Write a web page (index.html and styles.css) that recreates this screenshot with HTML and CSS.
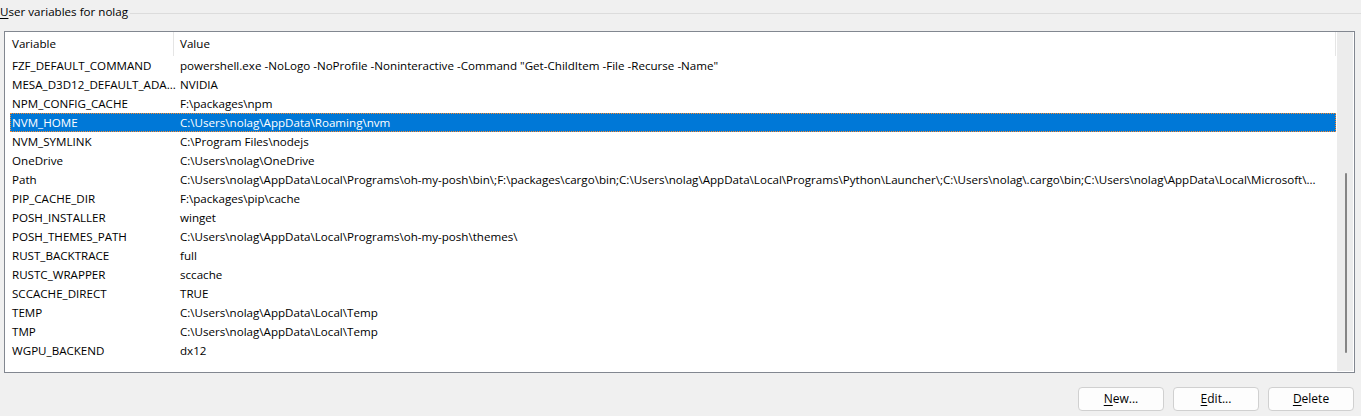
FILE: index.html
```html
<!DOCTYPE html>
<html>
<head>
<meta charset="utf-8">
<link rel="stylesheet" href="styles.css">
</head>
<body>
<div class="dialog">
  <div class="group-head">
    <span class="group-label"><u>U</u>ser variables for nolag</span>
    <span class="group-line"></span>
  </div>
  <div class="listbox">
    <div class="list">
      <div class="header">
        <div class="hcol hcol1">Variable</div>
        <div class="hcol hcol2">Value</div>
      </div>
      <div class="rows">
        <div class="row"><span class="c1">FZF_DEFAULT_COMMAND</span><span class="c2">powershell.exe -NoLogo -NoProfile -Noninteractive -Command "Get-ChildItem -File -Recurse -Name"</span></div>
        <div class="row"><span class="c1">MESA_D3D12_DEFAULT_ADA...</span><span class="c2">NVIDIA</span></div>
        <div class="row"><span class="c1">NPM_CONFIG_CACHE</span><span class="c2">F:\packages\npm</span></div>
        <div class="row selected"><span class="c1">NVM_HOME</span><span class="c2">C:\Users\nolag\AppData\Roaming\nvm</span></div>
        <div class="row"><span class="c1">NVM_SYMLINK</span><span class="c2">C:\Program Files\nodejs</span></div>
        <div class="row"><span class="c1">OneDrive</span><span class="c2">C:\Users\nolag\OneDrive</span></div>
        <div class="row"><span class="c1">Path</span><span class="c2">C:\Users\nolag\AppData\Local\Programs\oh-my-posh\bin\;F:\packages\cargo\bin;C:\Users\nolag\AppData\Local\Programs\Python\Launcher\;C:\Users\nolag\.cargo\bin;C:\Users\nolag\AppData\Local\Microsoft\...</span></div>
        <div class="row"><span class="c1">PIP_CACHE_DIR</span><span class="c2">F:\packages\pip\cache</span></div>
        <div class="row"><span class="c1">POSH_INSTALLER</span><span class="c2">winget</span></div>
        <div class="row"><span class="c1">POSH_THEMES_PATH</span><span class="c2">C:\Users\nolag\AppData\Local\Programs\oh-my-posh\themes\</span></div>
        <div class="row"><span class="c1">RUST_BACKTRACE</span><span class="c2">full</span></div>
        <div class="row"><span class="c1">RUSTC_WRAPPER</span><span class="c2">sccache</span></div>
        <div class="row"><span class="c1">SCCACHE_DIRECT</span><span class="c2">TRUE</span></div>
        <div class="row"><span class="c1">TEMP</span><span class="c2">C:\Users\nolag\AppData\Local\Temp</span></div>
        <div class="row"><span class="c1">TMP</span><span class="c2">C:\Users\nolag\AppData\Local\Temp</span></div>
        <div class="row"><span class="c1">WGPU_BACKEND</span><span class="c2">dx12</span></div>
      </div>
    </div>
    <div class="scrollbar"><div class="thumb"></div></div>
  </div>
  <div class="buttons">
    <button class="btn"><u>N</u>ew...</button>
    <button class="btn"><u>E</u>dit...</button>
    <button class="btn"><u>D</u>elete</button>
  </div>
</div>
</body>
</html>
```
FILE: styles.css
```css
html, body {
  margin: 0;
  padding: 0;
  background: #f0f0f0;
}
body {
  font-family: "Open Sans", "Noto Sans", "DejaVu Sans", sans-serif;
  font-size: 11.6px;
  color: #000;
  width: 1361px;
  height: 416px;
  overflow: hidden;
}
.dialog {
  display: flex;
  flex-direction: column;
}
.group-head {
  display: flex;
  align-items: center;
  height: 26px;
}
.group-label {
  white-space: nowrap;
  line-height: 16px;
  margin-top: -2px;
}
.group-label u {
  text-decoration-thickness: 1px;
  text-underline-offset: 2px;
}
.group-line {
  flex: 1;
  height: 1px;
  background: #dcdcdc;
  margin-left: 2px;
  margin-top: 1px;
}
.listbox {
  margin-top: 5px;
  margin-left: 4px;
  width: 1349px;
  height: 340px;
  border: 1px solid #828790;
  background: #fff;
  display: flex;
}
.list {
  flex: 1;
  min-width: 0;
  display: flex;
  flex-direction: column;
}
.header {
  display: flex;
  height: 24px;
  align-items: stretch;
  border-right: 1px solid #e5e5e5;
  width: 1330px;
}
.hcol {
  display: flex;
  align-items: center;
  white-space: nowrap;
  padding-bottom: 2px;
  box-sizing: border-box;
}
.hcol1 {
  width: 169px;
  padding-left: 7px;
  border-right: 1px solid #e5e5e5;
}
.hcol2 {
  padding-left: 6px;
}
.rows {
  display: flex;
  flex-direction: column;
  padding-left: 5px;
}
.row {
  height: 19px;
  display: flex;
  align-items: center;
  white-space: nowrap;
  box-sizing: border-box;
  width: 1326px;
}
.row.selected {
  background: #0078d7;
  color: #fff;
  outline: 1px dotted #ff8a2a;
  outline-offset: -1px;
}
.c1 {
  flex: 0 0 168px;
  padding-left: 2px;
  box-sizing: border-box;
  overflow: hidden;
}
.c2 {
  flex: 1;
  min-width: 0;
  overflow: hidden;
  padding-left: 2px;
}
.scrollbar {
  width: 16px;
  margin: 0 1px 1px 0;
  background: #ececec;
  position: relative;
}
.thumb {
  position: absolute;
  left: 8px;
  top: 141px;
  width: 2px;
  height: 180px;
  border-radius: 1px;
  background: #858585;
}
.buttons {
  display: flex;
  justify-content: flex-end;
  gap: 9px;
  margin-top: 14px;
  padding-right: 7px;
}
.btn {
  width: 86px;
  height: 24px;
  font: inherit;
  font-size: 12px;
  color: #000;
  background: #fdfdfd;
  border: 1px solid #d0d0d0;
  border-radius: 4px;
  padding: 0 0 2px 0;
}
.btn u {
  text-underline-offset: 2px;
}
```
